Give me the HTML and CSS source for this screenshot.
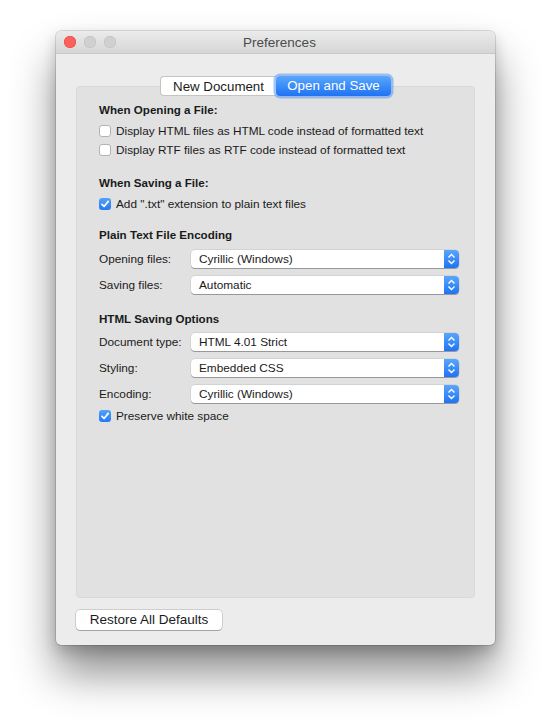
FILE: index.html
```html
<!DOCTYPE html>
<html>
<head>
<meta charset="utf-8">
<link rel="stylesheet" href="styles.css">
</head>
<body>
<div class="window">
  <div class="titlebar">
    <div class="lights">
      <span class="light red"></span>
      <span class="light"></span>
      <span class="light"></span>
    </div>
    <div class="title">Preferences</div>
  </div>
  <div class="content">
    <div class="tabs">
      <div class="tab">New Document</div>
      <div class="tab active">Open and Save</div>
    </div>
    <div class="group">
      <div class="heading">When Opening a File:</div>
      <div class="check first"><span class="box"></span>Display HTML files as HTML code instead of formatted text</div>
      <div class="check"><span class="box"></span>Display RTF files as RTF code instead of formatted text</div>

      <div class="heading h2">When Saving a File:</div>
      <div class="check first"><span class="box on"><svg width="12" height="12" viewBox="0 0 12 12"><path d="M3 6.3 L5.1 8.5 L9.2 3.4" fill="none" stroke="#fff" stroke-width="1.7" stroke-linecap="round" stroke-linejoin="round"/></svg></span>Add ".txt" extension to plain text files</div>

      <div class="heading h3">Plain Text File Encoding</div>
      <div class="row first"><span class="label">Opening files:</span><div class="popup"><span class="val">Cyrillic (Windows)</span><span class="arrows"><svg width="15" height="18" viewBox="0 0 15 18"><path d="M4.5 7.5 L7.5 4.5 L10.5 7.5 M4.5 10.5 L7.5 13.5 L10.5 10.5" fill="none" stroke="#fff" stroke-width="1.4"/></svg></span></div></div>
      <div class="row"><span class="label">Saving files:</span><div class="popup"><span class="val">Automatic</span><span class="arrows"><svg width="15" height="18" viewBox="0 0 15 18"><path d="M4.5 7.5 L7.5 4.5 L10.5 7.5 M4.5 10.5 L7.5 13.5 L10.5 10.5" fill="none" stroke="#fff" stroke-width="1.4"/></svg></span></div></div>

      <div class="heading h4">HTML Saving Options</div>
      <div class="row first2"><span class="label">Document type:</span><div class="popup"><span class="val">HTML 4.01 Strict</span><span class="arrows"><svg width="15" height="18" viewBox="0 0 15 18"><path d="M4.5 7.5 L7.5 4.5 L10.5 7.5 M4.5 10.5 L7.5 13.5 L10.5 10.5" fill="none" stroke="#fff" stroke-width="1.4"/></svg></span></div></div>
      <div class="row"><span class="label">Styling:</span><div class="popup"><span class="val">Embedded CSS</span><span class="arrows"><svg width="15" height="18" viewBox="0 0 15 18"><path d="M4.5 7.5 L7.5 4.5 L10.5 7.5 M4.5 10.5 L7.5 13.5 L10.5 10.5" fill="none" stroke="#fff" stroke-width="1.4"/></svg></span></div></div>
      <div class="row"><span class="label">Encoding:</span><div class="popup"><span class="val">Cyrillic (Windows)</span><span class="arrows"><svg width="15" height="18" viewBox="0 0 15 18"><path d="M4.5 7.5 L7.5 4.5 L10.5 7.5 M4.5 10.5 L7.5 13.5 L10.5 10.5" fill="none" stroke="#fff" stroke-width="1.4"/></svg></span></div></div>
      <div class="check last"><span class="box on"><svg width="12" height="12" viewBox="0 0 12 12"><path d="M3 6.3 L5.1 8.5 L9.2 3.4" fill="none" stroke="#fff" stroke-width="1.7" stroke-linecap="round" stroke-linejoin="round"/></svg></span>Preserve white space</div>
    </div>
    <div class="button">Restore All Defaults</div>
  </div>
</div>
</body>
</html>
```

FILE: styles.css
```css
html, body {
  margin: 0;
  padding: 0;
  background: #ffffff;
}
body {
  font-family: "Liberation Sans", Arial, sans-serif;
  font-size: 11.8px;
  color: #1a1a1a;
  padding: 31px 0 0 56px;
  min-height: 725px;
  box-sizing: border-box;
}
.window {
  width: 439px;
  height: 614px;
  box-sizing: border-box;
  background: #ececec;
  border-radius: 5px;
  box-shadow: 0 0 0 0.5px rgba(0,0,0,0.25), 0 28px 44px rgba(0,0,0,0.45), 0 6px 14px rgba(0,0,0,0.18);
}
.titlebar {
  height: 22px;
  border-bottom: 1px solid #c9c9c9;
  border-radius: 5px 5px 0 0;
  background: linear-gradient(#ebebeb, #d6d6d6);
  display: flex;
  align-items: center;
}
.lights {
  display: flex;
  gap: 8px;
  padding-left: 8px;
}
.light {
  width: 12px;
  height: 12px;
  border-radius: 50%;
  background: #d0d0d0;
  box-shadow: inset 0 0 0 0.5px #bdbdbd;
}
.light.red {
  background: #fc605c;
  box-shadow: inset 0 0 0 0.5px #e0443e;
}
.title {
  flex: 1;
  text-align: center;
  color: #4b4b4b;
  font-size: 13.5px;
  margin-left: -52px;
  padding-top: 1px;
}
.content {
  padding: 22px 20px 0 20px;
}
.tabs {
  display: flex;
  justify-content: center;
  position: relative;
  z-index: 1;
  height: 20px;
  font-size: 13.3px;
}
.tab {
  height: 20px;
  line-height: 20px;
  box-sizing: border-box;
  background: #ffffff;
  border: 1px solid #c4c4c4;
  border-right: none;
  border-radius: 4px 0 0 4px;
  width: 116px;
  text-align: center;
  color: #1a1a1a;
}
.tab.active {
  border: none;
  border-radius: 4px;
  width: 115px;
  color: #ffffff;
  background: linear-gradient(#5aa6fb, #1f73f4);
  box-shadow: 0 0 0 2.5px rgba(90,150,240,0.55);
}
.group {
  margin-top: -10px;
  height: 512px;
  box-sizing: border-box;
  background: #e1e1e1;
  border: 1px solid #d9d9d9;
  border-radius: 4px;
  padding: 15px 15px 0 22px;
}
.heading {
  font-weight: bold;
  font-size: 11.6px;
  height: 16px;
  line-height: 16px;
}
.h2 { margin-top: 16px; }
.h3 { margin-top: 14px; }
.h4 { margin-top: 17px; }
.check {
  display: flex;
  align-items: center;
  height: 18px;
  margin-top: 1px;
}
.check.first { margin-top: 4px; }
.check.last { margin-top: 4px; }
.box {
  width: 12px;
  height: 12px;
  box-sizing: border-box;
  border-radius: 3px;
  background: #ffffff;
  border: 1px solid #b3b3b3;
  margin-right: 5px;
  display: flex;
  align-items: center;
  justify-content: center;
}
.box.on {
  border: none;
  background: linear-gradient(#55a2fa, #2378f5);
}
.box svg { display: block; }
.row {
  display: flex;
  align-items: center;
  height: 18px;
  margin-top: 8px;
}
.row.first { margin-top: 7px; }
.row.first2 { margin-top: 6px; }
.label {
  width: 92px;
  flex: none;
}
.popup {
  flex: 1;
  height: 18px;
  display: flex;
  align-items: stretch;
  background: #ffffff;
  border-radius: 4px;
  box-shadow: 0 0 0 0.5px rgba(0,0,0,0.12), 0 1px 0 rgba(0,0,0,0.28);
  overflow: hidden;
}
.val {
  flex: 1;
  padding-left: 8px;
  line-height: 18px;
}
.arrows {
  width: 15px;
  background: linear-gradient(#5aa6fb, #1f73f4);
  display: flex;
  align-items: center;
  justify-content: center;
}
.arrows svg { display: block; }
.button {
  margin-top: 12px;
  width: 146px;
  height: 20px;
  line-height: 20px;
  box-sizing: border-box;
  text-align: center;
  font-size: 13.5px;
  background: #ffffff;
  border-radius: 4px;
  box-shadow: 0 0 0 0.5px rgba(0,0,0,0.25), 0 1px 0 rgba(0,0,0,0.2);
  color: #1a1a1a;
}
```
